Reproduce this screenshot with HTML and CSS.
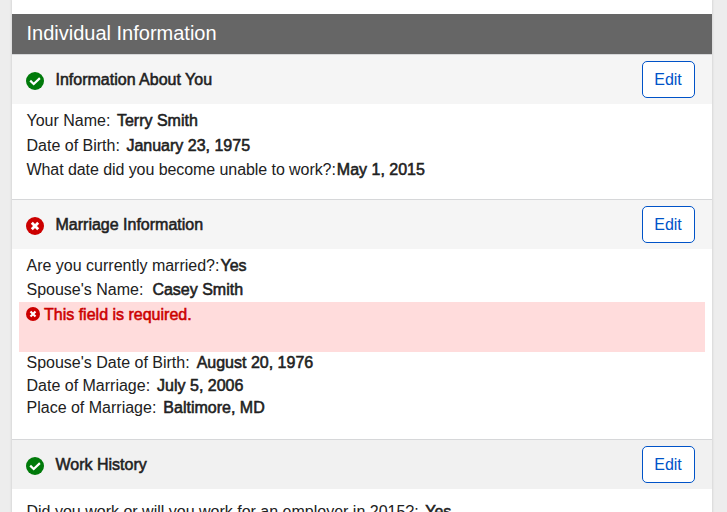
FILE: index.html
```html
<!DOCTYPE html>
<html lang="en">
<head>
<meta charset="utf-8">
<title>Individual Information</title>
<link rel="stylesheet" href="styles.css">
</head>
<body>
<svg class="defs" aria-hidden="true">
  <symbol id="check" viewBox="0 0 18 18"><circle cx="9" cy="9" r="9" fill="#007a0a"/><path d="M4.2 8.6l3.5 3.4 6.2-5.9" fill="none" stroke="#fff" stroke-width="2.2"/></symbol>
  <symbol id="cross" viewBox="0 0 18 18"><circle cx="9" cy="9" r="9" fill="#cc0000"/><path d="M5.8 5.8l6.4 6.4M12.2 5.8l-6.4 6.4" fill="none" stroke="#fff" stroke-width="2.8"/></symbol>
</svg>
<main class="card">
  <h1 class="title">Individual Information</h1>
  <section>
    <header class="head"><svg class="icon"><use href="#check"/></svg><h2>Information About You</h2><button class="edit">Edit</button></header>
    <dl class="body about">
      <div class="row"><dt>Your Name:</dt><dd>Terry Smith</dd></div>
      <div class="row"><dt>Date of Birth:</dt><dd>January 23, 1975</dd></div>
      <div class="row flush"><dt>What date did you become unable to work?:</dt><dd>May 1, 2015</dd></div>
    </dl>
  </section>
  <section>
    <header class="head"><svg class="icon"><use href="#cross"/></svg><h2>Marriage Information</h2><button class="edit">Edit</button></header>
    <div class="body marriage">
      <dl>
        <div class="row tight"><dt>Are you currently married?:</dt><dd>Yes</dd></div>
        <div class="row wide"><dt>Spouse's Name:</dt><dd>Casey Smith</dd></div>
      </dl>
      <div class="error"><svg class="icon-small"><use href="#cross"/></svg><span>This field is required.</span></div>
      <dl class="compact">
        <div class="row"><dt>Spouse's Date of Birth:</dt><dd>August 20, 1976</dd></div>
        <div class="row"><dt>Date of Marriage:</dt><dd>July 5, 2006</dd></div>
        <div class="row"><dt>Place of Marriage:</dt><dd>Baltimore, MD</dd></div>
      </dl>
    </div>
  </section>
  <section>
    <header class="head active"><svg class="icon"><use href="#check"/></svg><h2>Work History</h2><button class="edit">Edit</button></header>
    <dl class="body work">
      <div class="row"><dt>Did you work or will you work for an employer in 2015?:</dt><dd>Yes</dd></div>
    </dl>
  </section>
</main>
</body>
</html>
```
FILE: styles.css
```css
* { box-sizing: border-box; }
html, body { height: 100%; }
body {
  margin: 0;
  overflow: hidden;
  background: #ededed;
  color: #212121;
  font: 16px "Liberation Sans", Arial, sans-serif;
}
h1, h2, dl, dd { margin: 0; font-weight: 400; }
.defs { display: none; }
.card {
  width: 700px;
  min-height: 100%;
  margin-left: 12px;
  padding-top: 14px;
  background: #fff;
  box-shadow: 0 0 2px 1px #d8d8d8;
}
.title {
  height: 40px;
  padding-left: 14.5px;
  background: #666;
  color: #fff;
  font-size: 20px;
  line-height: 39px;
}
.head {
  display: flex;
  align-items: center;
  height: 50px;
  padding: 0 17px 0 14px;
  border-top: 1px solid #d6d7d9;
  background: #f5f5f5;
}
.head.active { background: #f1f1f1; }
.icon { width: 18px; height: 18px; margin: 3px 11.5px 0 0; }
.head h2 { font-size: 16px; line-height: 20px; }
.head h2, dd, .error span { -webkit-text-stroke: 0.55px currentColor; }
.edit {
  width: 53px;
  height: 37px;
  margin-left: auto;
  padding: 0 1px 0 0;
  border: 1px solid #0053c8;
  border-radius: 5px;
  background: #fff;
  color: #0053c8;
  font: inherit;
}
.body { padding: 4.5px 7px 0; }
.about { height: 95px; }
.about .row:first-child { height: 25px; }
.marriage { height: 190px; }
.row { display: flex; gap: 6.5px; padding-left: 7.5px; line-height: 24.5px; white-space: nowrap; }
.row.tight { gap: 1px; }
.row.wide { gap: 9px; }
.row.flush { gap: 1px; }
.row.flush dt { letter-spacing: -0.07px; }
.compact .row { gap: 7px; line-height: 22.5px; }
.error {
  display: flex;
  align-items: flex-start;
  gap: 4px;
  height: 50px;
  margin-top: -0.5px;
  padding: 3px 7px;
  background: #ffdcdc;
  color: #cc0000;
}
.icon-small { width: 14px; height: 14px; margin-top: 2px; }
.error span { line-height: 20px; }
.work { padding-top: 11px; }
```
